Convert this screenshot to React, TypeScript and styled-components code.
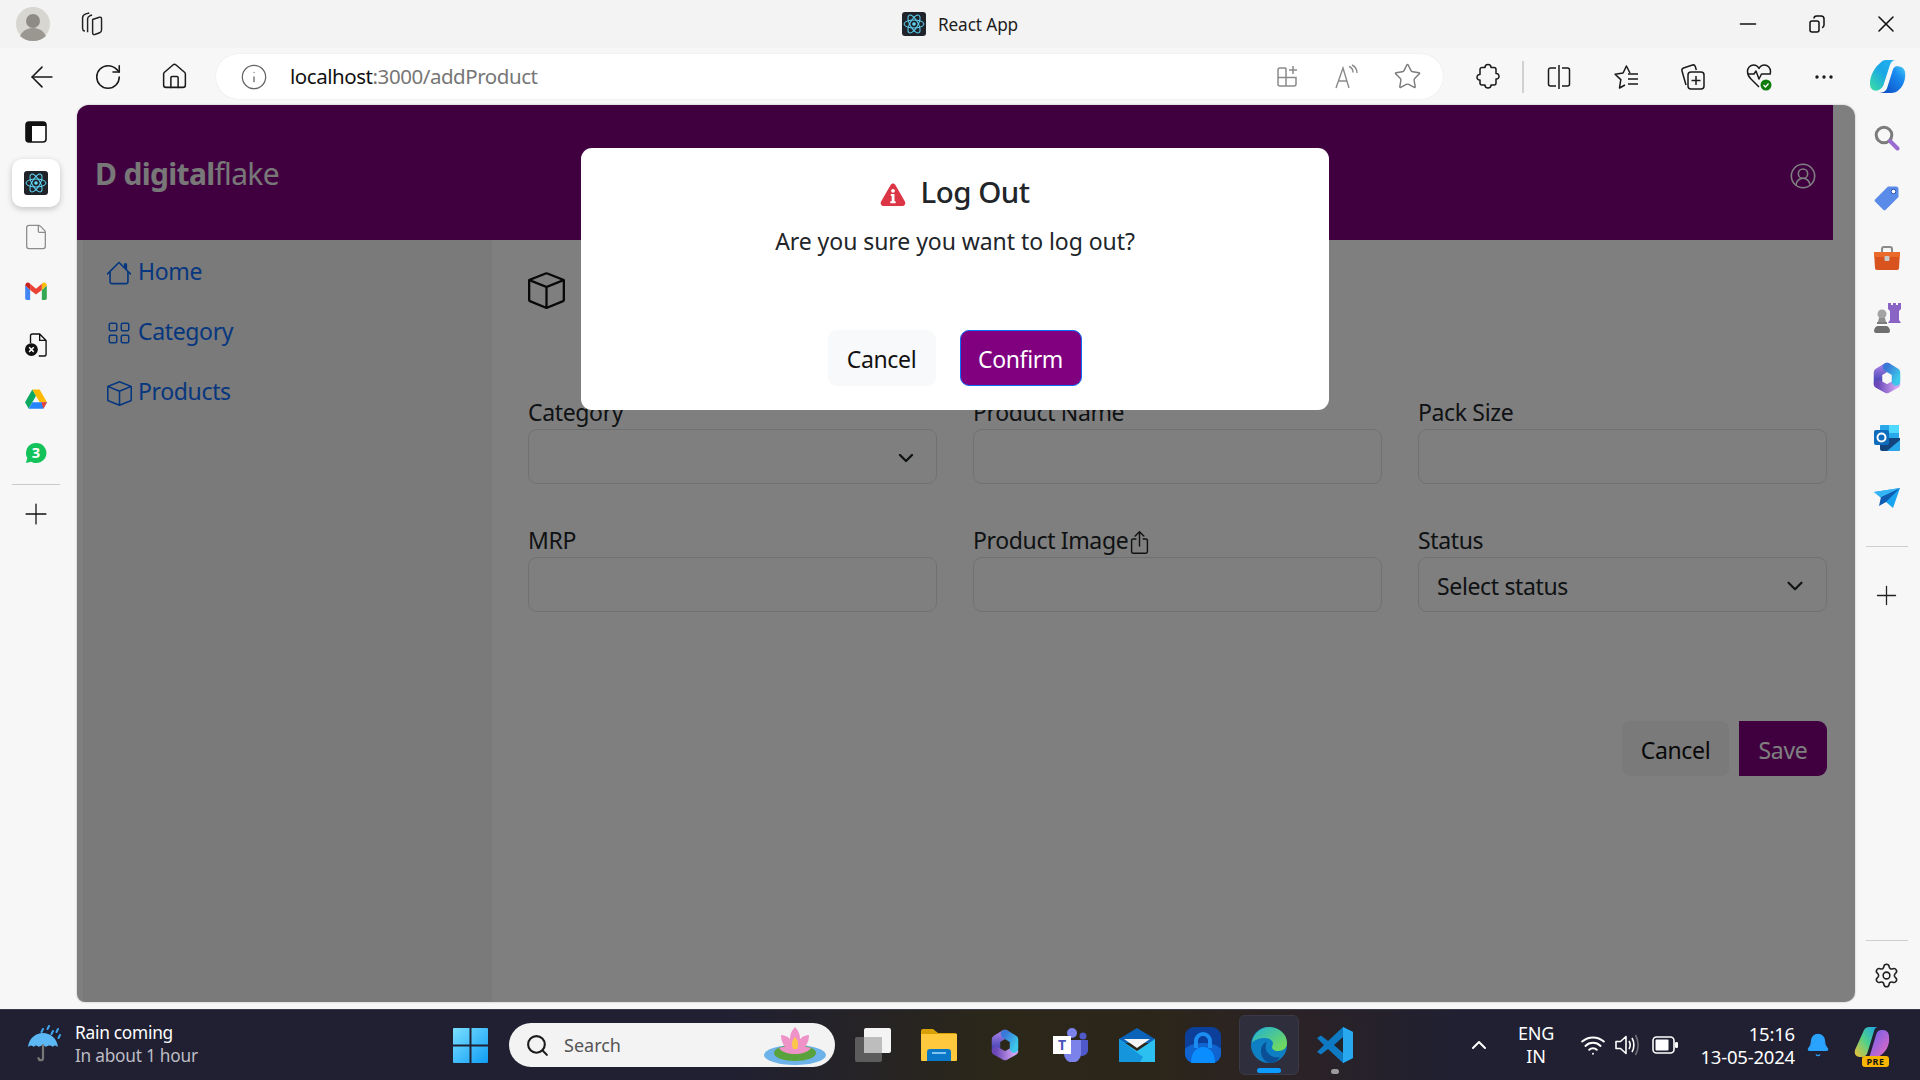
import React from 'react';
import styled, { createGlobalStyle } from 'styled-components';
import {
  ArrowLeft, RotateCw, House, Info, Star, Settings, Plus, ChevronDown, ChevronUp,
  CircleUserRound, Wifi, Bell, Search, File, X, Minus,
} from 'lucide-react';
import { BsHouse, BsGrid, BsBox, BsBoxArrowUp } from 'react-icons/bs';

const FONT = `"Noto Sans", "Open Sans", "Liberation Sans", sans-serif`;

const Global = createGlobalStyle`
  html, body { margin: 0; padding: 0; width: 1920px; height: 1080px; overflow: hidden; background: #f7f7f7; }
  * { box-sizing: border-box; }
  body { font-family: ${FONT}; }
`;

const Screen = styled.div`display: flex; flex-direction: column; width: 1920px; height: 1080px; background: #f7f7f7;`;

/* ---- browser chrome ---- */
const TitleBar = styled.div`display: grid; grid-template-columns: 1fr auto 1fr; align-items: center; height: 48px; background: #f3f3f3;`;
const TitleLeft = styled.div`display: flex; align-items: center; padding-left: 16px; gap: 27px;`;
const TabTitle = styled.div`display: flex; align-items: center; gap: 12px; font-size: 17.2px; letter-spacing: -0.1px; color: #1c1c1c;`;
const WindowButtons = styled.div`display: flex; justify-content: flex-end;`;
const WindowButton = styled.div`width: 69px; height: 48px; display: flex; align-items: center; justify-content: center; color: #111;`;

const Toolbar = styled.div`display: flex; align-items: center; height: 57px; padding-left: 9px; background: #f7f7f7;`;
const Slot = styled.div<{ $w?: number }>`width: ${p => p.$w ?? 66}px; height: 45px; flex: none; display: flex; align-items: center; justify-content: center; color: #1a1a1a;`;
const AddressBar = styled.div`flex: 1; height: 45px; margin: 0 12px 0 9px; padding: 0 6px 0 24px; display: flex; align-items: center; border-radius: 23px; background: #fff; box-shadow: 0 0 2px rgba(0,0,0,.08);`;
const Url = styled.div`flex: 1; margin: -2px 0 0 22px; font-size: 20.5px; letter-spacing: -0.45px; color: #767676; b { font-weight: 400; color: #111; }`;
const ToolbarRule = styled.div`width: 2px; height: 32px; margin: 0 2px 0 1px; background: #d0d0d0;`;

const Body = styled.div`display: flex; height: 904px;`;

const LeftRail = styled.div`width: 77px; flex: none; padding-left: 12px; display: flex; flex-direction: column; align-items: flex-start;`;
const RailItem = styled.div<{ $h?: number; $active?: boolean }>`
  width: 48px; height: ${p => p.$h ?? 54}px; flex: none; display: flex; align-items: center; justify-content: center;
  ${p => p.$active ? 'margin-bottom: 3px; background: #fff; border-radius: 10px; box-shadow: 0 2px 6px rgba(0,0,0,.22);' : ''}
`;
const RailRule = styled.div<{ $gap?: number }>`width: 48px; height: 1px; flex: none; background: #c9c9c9; margin-top: ${p => p.$gap ?? 4}px;`;

const RightRail = styled.div`width: 65px; flex: none; padding: 3px 2px 0 0; display: flex; flex-direction: column; align-items: center;`;
const RightItem = styled.div<{ $h?: number }>`width: 63px; height: ${p => p.$h ?? 60}px; flex: none; display: flex; align-items: center; justify-content: center; color: #222;`;
const RightRule = styled.div`width: 42px; height: 1px; flex: none; background: #cfcfcf; margin-top: 18px;`;
const Spacer = styled.div`flex: 1;`;

/* ---- web page ---- */
const Panel = styled.div`position: relative; width: 1778px; height: 897px; flex: none; overflow: hidden; background: #fff; border-radius: 12px 12px 10px 8px; box-shadow: 0 0 2px rgba(0,0,0,.3);`;
const PageHeader = styled.header`width: 1756px; height: 135px; padding: 0 16px 0 18px; display: flex; align-items: center; justify-content: space-between; background: #800080; color: #fff;`;
const Logo = styled.div`font-size: 30px; letter-spacing: -0.68px; color: #f0f0f0; b { font-weight: 700; } margin-top: 1px;`;
const UserButton = styled.div`display: flex; margin: 6px 0 0 0; color: #fff;`;
const PageBody = styled.div`display: flex; height: 762px; padding-left: 6px;`;
const SideNav = styled.nav`width: 409px; flex: none; padding: 1px 0 0 24px; background: #f4f4f4;`;
const NavLink = styled.a`display: flex; align-items: center; gap: 7px; height: 60px; font-size: 23px; letter-spacing: -0.35px; color: #0d6efd;`;
const NavIcon = styled.span`display: flex; width: 24px; justify-content: center; padding-top: 4px; svg { flex: none; }`;
const Main = styled.main`flex: 1; padding: 32px 0 0 36px;`;
const PageIcon = styled.div`height: 37px; display: flex; color: #111;`;
const FormGrid = styled.div`display: grid; grid-template-columns: repeat(3, 409px); column-gap: 36px; row-gap: 37px; margin-top: 84px;`;
const Field = styled.div`display: flex; flex-direction: column;`;
const Label = styled.label`display: flex; align-items: center; height: 36px; font-size: 23px; letter-spacing: -0.35px; color: #212529; padding-top: 2px;`;
const LabelIcon = styled.span`display: flex; margin-top: 5px;`;
const Control = styled.div`height: 55px; display: flex; align-items: center; justify-content: space-between; padding: 2px 18px 0 18px; border: 1px solid #dee2e6; border-radius: 9px; background: #fff; font-size: 23px; letter-spacing: -0.35px; color: #212529;`;
const Actions = styled.div`display: flex; justify-content: flex-end; gap: 10px; width: 1299px; margin-top: 109px;`;
const PlainButton = styled.div`width: 107px; height: 55px; padding-top: 2px; display: flex; align-items: center; justify-content: center; border-radius: 8px; background: #f4f4f4; font-size: 23px; letter-spacing: -0.35px; color: #111;`;
const SaveButton = styled.div`width: 88px; height: 55px; padding-top: 2px; display: flex; align-items: center; justify-content: center; border-radius: 0 9px 9px 0; background: #800080; font-size: 23px; letter-spacing: -0.35px; color: #fff;`;

const Backdrop = styled.div`position: absolute; inset: 0; background: rgba(0,0,0,.5);`;
const Modal = styled.div`position: absolute; top: 43px; left: 504px; width: 748px; height: 262px; padding: 20px 0 24px; display: flex; flex-direction: column; align-items: center; border-radius: 11px; background: #fff;`;
const ModalTitle = styled.div`display: flex; align-items: center; gap: 14px; height: 46px; font-size: 29.5px; font-weight: 500; letter-spacing: -0.5px; color: #212529;`;
const ModalIcon = styled.span`display: flex; margin-top: 6px;`;
const ModalText = styled.div`margin-top: 9px; font-size: 23px; letter-spacing: -0.06px; line-height: 36px; color: #212529;`;
const ModalActions = styled.div`margin-top: auto; display: flex; gap: 24px; margin-right: 1px;`;
const ModalCancel = styled.div`width: 108px; height: 56px; padding-top: 2px; display: flex; align-items: center; justify-content: center; border-radius: 9px; background: #f8f9fa; font-size: 23px; letter-spacing: -0.35px; color: #111;`;
const ModalConfirm = styled.div`width: 122px; height: 56px; padding-top: 2px; display: flex; align-items: center; justify-content: center; border: 1.5px solid #0d6efd; border-radius: 9px; background: #800080; font-size: 23px; letter-spacing: -0.35px; color: #fff;`;

/* ---- taskbar ---- */
const Taskbar = styled.div`display: flex; align-items: center; height: 71px; margin-top: 0; color: #fff; border-top: 1px solid #3a3a4a;
  background: linear-gradient(90deg, #202032 0%, #202032 38%, #2b2719 52%, #2c261a 60%, #2a2226 68%, #202032 76%, #202032 100%);`;
const Weather = styled.div`width: 449px; padding-left: 27px; flex: none; display: flex; align-items: center; gap: 12px;`;
const WeatherText = styled.div`font-size: 17.3px; letter-spacing: -0.25px; line-height: 23px; margin-top: -2px; span { display: block; color: #bdbdc4; }`;
const StartButton = styled.div`width: 42px; display: flex; flex: none; justify-content: center;`;
const SearchBox = styled.div`width: 326px; height: 44px; margin: 0 5px 0 18px; padding: 0 7px 0 16px; flex: none; display: flex; align-items: center; gap: 14px; border-radius: 22px; background: #f3f3f3; font-size: 18px; color: #555;`;
const SearchLabel = styled.span`flex: 1;`;
const TaskSlot = styled.div<{ $active?: boolean }>`
  position: relative; width: ${p => p.$active ? 60 : 66}px; height: 60px; flex: none; display: flex; align-items: center; justify-content: center;
  ${p => p.$active ? 'margin: 0 3px; background: #2f2e3c; border-radius: 6px; border: 1px solid #3a3946;' : ''}
`;
const RunningBar = styled.i`position: absolute; left: 17px; bottom: 1px; width: 24px; height: 5px; border-radius: 3px; background: #0c9bff;`;
const RunningDot = styled.i`position: absolute; left: 29px; bottom: 1px; width: 8px; height: 5px; border-radius: 3px; background: #9b9b9b;`;
const Tray = styled.div`margin-left: auto; display: flex; align-items: center;`;
const TraySlot = styled.div<{ $w: number }>`width: ${p => p.$w}px; flex: none; display: flex; justify-content: center; align-items: center; color: #fff;`;
const Lang = styled.div`font-size: 18px; letter-spacing: -0.2px; line-height: 23px; text-align: center;`;
const Clock = styled.div`width: 110px; flex: none; font-size: 18.5px; letter-spacing: -0.2px; line-height: 23px; text-align: right; white-space: nowrap;`;
const CopilotPre = styled.div`position: relative; width: 36px; height: 36px; display: flex;`;
const PreBadge = styled.span`position: absolute; left: 8px; bottom: -4px; width: 27px; height: 11px; border-radius: 3px; background: #f7b500; color: #111; font-size: 9px; line-height: 11px; font-weight: 700; letter-spacing: .5px; text-align: center;`;

/* ---- drawn icons ---- */
const Avatar = () => (
  <svg width="34" height="34" viewBox="0 0 34 34"><circle cx="17" cy="17" r="17" fill="#d8d6d1" /><circle cx="17" cy="14" r="7" fill="#8e8b85" /><path d="M4 29c3-6 8-8 13-8s10 2 13 8c-3 3-8 5-13 5s-10-2-13-5z" fill="#9a9791" /></svg>
);
const TabsIcon = () => (
  <svg width="29" height="29" viewBox="0 0 26 26" fill="none" stroke="#222" strokeWidth="1.300"><path d="M7 19c-1-.3-2-1-2-2.500V7c0-2 1-3 3-3.500l3-.8" /><path d="M9.500 20V8c0-1.500.8-2.300 2-2.800l2-.7" /><path d="M14 8.500l6-2c1.200-.4 2 .2 2 1.500v10c0 1.300-.6 2-1.700 2.400L16 22c-1.200.3-2-.3-2-1.500z" /></svg>
);
const ReactTile = ({ s = 24 }: { s?: number }) => (
  <svg width={s} height={s} viewBox="0 0 24 24"><rect width="24" height="24" rx="3" fill="#20232a" /><g fill="none" stroke="#61dafb" strokeWidth="1"><ellipse cx="12" cy="12" rx="10" ry="4" /><ellipse cx="12" cy="12" rx="10" ry="4" transform="rotate(60 12 12)" /><ellipse cx="12" cy="12" rx="10" ry="4" transform="rotate(120 12 12)" /></g><circle cx="12" cy="12" r="1.800" fill="#61dafb" /></svg>
);
const AddTileIcon = () => (
  <svg width="24" height="24" viewBox="0 0 24 24" fill="none" stroke="#8a8a8a" strokeWidth="1.500"><path d="M11 3H5a2 2 0 0 0-2 2v14a2 2 0 0 0 2 2h14a2 2 0 0 0 2-2v-6.500H3M11 3v18" /><path d="M18 1v8M14 5h8" /></svg>
);
const ReadAloudIcon = () => (
  <svg width="26" height="26" viewBox="0 0 26 26" fill="none" stroke="#8a8a8a" strokeWidth="1.400"><path d="M2 24L9 4l6 20M4.500 17h9" /><path d="M15 2.500c2.500 1 4 3 4 6M18 1c3 1.500 5 4 5 8" /></svg>
);
const PuzzleIcon = () => (
  <svg width="25" height="27" viewBox="0 0 25 27" fill="none" stroke="#1a1a1a" strokeWidth="1.500" strokeLinejoin="round"><path d="M9 4.500c0-4 6-4 6 0h3a2 2 0 0 1 2 2v4c4-.5 4 6 0 5.500v4a2 2 0 0 1-2 2h-3c0 4-6 4-6 0H6a2 2 0 0 1-2-2v-3c-4 .5-4-6 0-5.500v-5a2 2 0 0 1 2-2z" /></svg>
);
const SplitIcon = () => (
  <svg width="24" height="26" viewBox="0 0 24 26" fill="none" stroke="#1a1a1a" strokeWidth="1.500"><path d="M12 1v24M9 4H3.500A2 2 0 0 0 1.500 6v14a2 2 0 0 0 2 2H9M15 4h5.500a2 2 0 0 1 2 2v14a2 2 0 0 1-2 2H15" /></svg>
);
const FavoritesIcon = () => (
  <svg width="26" height="26" viewBox="0 0 26 26" fill="none" stroke="#1a1a1a" strokeWidth="1.500" strokeLinejoin="round"><path d="M17 9l-3.600-7-3.300 7-8 1.200 5.700 5.400L6.500 24l5.500-3" /><path d="M15 10h10M15 15h10M15 20h10" /></svg>
);
const CollectionsIcon = () => (
  <svg width="26" height="28" viewBox="0 0 26 28" fill="none" stroke="#1a1a1a" strokeWidth="1.500"><path d="M6 22L2 8c-.4-1.500.2-2.500 1.500-3l9-3c1.400-.4 2.300.2 2.800 1.500l1 3.500" /><rect x="8" y="9" width="16" height="17" rx="3" /><path d="M16 13v9M11.500 17.500h9" /></svg>
);
const HealthIcon = () => (
  <svg width="28" height="30" viewBox="0 0 28 30" fill="none"><path d="M5 17C3 15 1.500 13 1.500 9.500 1.500 5.500 4.500 3 7.500 3c2.700 0 4.500 1.500 5.500 3.500C14 4.500 15.800 3 18.500 3c3 0 6 2.500 6 6.500 0 1-.2 2-.5 3M1.500 12H8l2 -3 3 8 2.500-5H24M5 17l8 8" stroke="#1a1a1a" strokeWidth="1.500" strokeLinejoin="round" /><circle cx="20" cy="23" r="5.500" fill="#107c10" /><path d="M17.500 23l2 2 3-3.500" stroke="#fff" strokeWidth="1.300" /></svg>
);
const Dots = () => (
  <svg width="20" height="6" viewBox="0 0 20 6" fill="#1a1a1a"><circle cx="3" cy="3" r="1.700" /><circle cx="10" cy="3" r="1.700" /><circle cx="17" cy="3" r="1.700" /></svg>
);
const CopilotIcon = () => (
  <svg width="36" height="33" viewBox="0 0 36 42" preserveAspectRatio="none"><defs><linearGradient id="cpa" x1="0" y1="1" x2="1" y2="0"><stop offset="0" stopColor="#3ae0a0" /><stop offset=".55" stopColor="#1ba6e6" /><stop offset="1" stopColor="#22b4f2" /></linearGradient><linearGradient id="cpb" x1="0" y1="1" x2="1" y2="0"><stop offset="0" stopColor="#0b46c0" /><stop offset=".7" stopColor="#1a8cf0" /><stop offset="1" stopColor="#47d0f5" /></linearGradient></defs><path d="M27 8c3 0 7 1 8 7 1 8-1 17-6 23-2 3-5 4-8 4H9c5 0 7-3 8-6l5-20c1-5 2-8 5-8z" fill="url(#cpb)" /><path d="M11 3c1-2 3-3 5-3h10c-3 0-5 2-6 6l-6 24c-1 6-5 9-8 9-4 0-6-3-6-9C0 19 5 9 11 3z" fill="url(#cpa)" /></svg>
);
const PanelIcon = () => (
  <svg width="22" height="22" viewBox="0 0 22 22"><rect x="1" y="1" width="20" height="20" rx="3" fill="#fff" stroke="#111" strokeWidth="1.600" /><path d="M1 5V4a3 3 0 0 1 3-3h14a3 3 0 0 1 3 3v1z M1 5h6v16H4a3 3 0 0 1-3-3z" fill="#111" /></svg>
);
const Gmail = () => (
  <svg width="22" height="18" viewBox="0 0 24 20"><path d="M0 4v14a2 2 0 0 0 2 2h3.500V9z" fill="#4285f4" /><path d="M24 4v14a2 2 0 0 1-2 2h-3.500V9z" fill="#34a853" /><path d="M18.500 9V2L12 7.500 5.500 2v7L12 14z" fill="#ea4335" /><path d="M0 4c0-3 3-5 5.500-2v7z" fill="#c5221f" /><path d="M24 4c0-3-3-5-5.500-2v7z" fill="#fbbc04" /></svg>
);
const FileXIcon = () => (
  <svg width="22" height="24" viewBox="0 0 24 26" fill="none"><path d="M6 11V3a2 2 0 0 1 2-2h8l7 7v15a2 2 0 0 1-2 2h-6M16 1v7h7" stroke="#111" strokeWidth="1.500" /><circle cx="7" cy="18" r="7" fill="#111" /><path d="M4.500 15.500l5 5M9.500 15.500l-5 5" stroke="#fff" strokeWidth="1.600" /></svg>
);
const Drive = () => (
  <svg width="22" height="20" viewBox="0 0 24 21"><path d="M8 0L0 14l4 7 8-14z" fill="#0da960" /><path d="M8 0h8l8 14h-8z" fill="#ffba00" /><path d="M4 21l4-7h16l-4 7z" fill="#2684fc" /><path d="M20 21l4-7h-6z" fill="#ea4335" /></svg>
);
const WhatsAppBadge = () => (
  <svg width="22" height="22" viewBox="0 0 24 24"><path d="M12 1a11 11 0 0 0-9.500 16.500L1 23l5.800-1.500A11 11 0 1 0 12 1z" fill="#14c25a" /><text x="12" y="17.500" textAnchor="middle" fontSize="16" fontWeight="700" fontFamily="Noto Sans, sans-serif" fill="#fff">3</text></svg>
);
const SearchColor = () => (
  <svg width="26" height="26" viewBox="0 0 26 26"><circle cx="10" cy="10" r="7.800" fill="none" stroke="#7b7b7b" strokeWidth="3" /><path d="M16 16l7.500 7.500" stroke="#9a6bcf" strokeWidth="4" strokeLinecap="round" /></svg>
);
const TagColor = () => (
  <svg width="26" height="26" viewBox="0 0 26 26"><path d="M14 1.500h8a2.500 2.500 0 0 1 2.500 2.500v8L12 24.500a2 2 0 0 1-3 0L1.500 17a2 2 0 0 1 0-3z" fill="#5b8be8" /><circle cx="19.500" cy="6.500" r="2.300" fill="#fff" stroke="#2c4fb0" strokeWidth="1" /></svg>
);
const Toolbox = () => (
  <svg width="28" height="24" viewBox="0 0 28 24"><path d="M9 6V3a2 2 0 0 1 2-2h6a2 2 0 0 1 2 2v3" fill="none" stroke="#8a8a8a" strokeWidth="2" /><path d="M1 6h26l-1 16a2 2 0 0 1-2 2H4a2 2 0 0 1-2-2z" fill="#d9531e" /><path d="M1 6h26v5H1z" fill="#ea6a2c" /><rect x="11.500" y="10" width="5" height="5" rx="1" fill="#c8c8c8" /></svg>
);
const Chess = () => (
  <svg width="28" height="32" viewBox="0 0 28 32"><path d="M15 1h3v2h2V1h3v2h2V1h3v6l-2 2v9l2 3H15l2-3V9l-2-2z" fill="#8a64c4" /><circle cx="9" cy="12" r="4.500" fill="#a3a3a3" /><path d="M6 16h6l1 4H5z" fill="#8e8e8e" /><path d="M4 20h10v2H4z" fill="#7c7c7c" /><path d="M1 29c0-3 2-5 4-5h8c2 0 4 2 4 5a2 2 0 0 1-2 2H3a2 2 0 0 1-2-2z" fill="#6f6f6f" /></svg>
);
const HexLogo = ({ id }: { id: string }) => (
  <svg width="28" height="32" viewBox="0 0 28 32" fill="none" strokeWidth="8.500" strokeLinecap="round" strokeLinejoin="round"><defs><linearGradient id={`${id}a`} x1="0" y1="0" x2="1" y2="1"><stop offset="0" stopColor="#3a78d8" /><stop offset="1" stopColor="#3cc8ea" /></linearGradient><linearGradient id={`${id}b`} x1="0" y1="0" x2="0" y2="1"><stop offset="0" stopColor="#9a78e0" /><stop offset="1" stopColor="#3a3fb0" /></linearGradient><linearGradient id={`${id}c`} x1="0" y1="0" x2="1" y2="0"><stop offset="0" stopColor="#6a48b8" /><stop offset="1" stopColor="#d0a4f2" /></linearGradient></defs><path d="M5 21.500v-11L14 5" stroke={`url(#${id}b)`} /><path d="M5 22l9 5 9-5" stroke={`url(#${id}c)`} /><path d="M14 5l9 5.500v9" stroke={`url(#${id}a)`} /></svg>
);
const Outlook = () => (
  <svg width="26" height="26" viewBox="0 0 26 26"><rect x="6" y="0" width="19" height="15" rx="1" fill="#28a8ea" /><rect x="15" y="0" width="10" height="8" fill="#50d9ff" /><path d="M6 13h20v11a2 2 0 0 1-2 2H8a2 2 0 0 1-2-2z" fill="#14447d" /><path d="M13 26l13-11v9a2 2 0 0 1-2 2z" fill="#28a8ea" /><rect x="0" y="5" width="15" height="15" rx="2" fill="#0f6cbd" /><circle cx="7.500" cy="12.500" r="4" fill="none" stroke="#fff" strokeWidth="2" /></svg>
);
const Plane = () => (
  <svg width="26" height="20" viewBox="0 0 26 20"><path d="M0 4L26 0 19 20l-7-6z" fill="#1aa3ee" /><path d="M26 0L7 9l-2 9 7-4z" fill="#0f5cb0" /><path d="M0 4l7 5 19-9z" fill="#35b5f5" /></svg>
);
const AlertIcon = () => (
  <svg width="26" height="23" viewBox="0 0 26 23"><path d="M10.600 2L1.100 18.500C0 20.500 1.200 23 3.500 23h19c2.300 0 3.500-2.500 2.400-4.500L15.400 2c-1.100-2-3.700-2-4.800 0z" fill="#dc3545" /><circle cx="13" cy="7.800" r="1.900" fill="#fff" /><path d="M10.800 11h3.700v7.200h1.200v2h-5.400v-2h1.400v-5.200h-.9z" fill="#fff" /></svg>
);
const Umbrella = () => (
  <svg width="36" height="40" viewBox="0 0 36 40"><g stroke="#3fa4ee" strokeWidth="2" strokeLinecap="round"><path d="M16 4l-1.500 3M22 1l-1.500 3M26 6l-1.500 3M31 4l-1.500 3M33 10l-1.500 3" /></g><path d="M1 22C2 13 9 8 16 8s14 5 15 14c-2-2-4-2-5 0-2-2-5-2-7 0-2-2-5-2-7 0-2-2-4-2-5 0-2-2-4-2-6 0z" fill="#5cb8f5" /><path d="M16 20v13c0 3-4 3-4.500 0" fill="none" stroke="#777" strokeWidth="2.200" strokeLinecap="round" /></svg>
);
const WindowsLogo = () => (
  <svg width="35" height="35" viewBox="0 0 35 35"><defs><linearGradient id="win" x1="0" y1="0" x2="1" y2="1"><stop offset="0" stopColor="#7be0ff" /><stop offset="1" stopColor="#0f9cf5" /></linearGradient></defs><path d="M1 0h15.500v16.500H0V1a1 1 0 0 1 1-1zM18.500 0H34a1 1 0 0 1 1 1v15.500H18.500zM0 18.500h16.500V35H1a1 1 0 0 1-1-1zM18.500 18.500H35V34a1 1 0 0 1-1 1H18.500z" fill="url(#win)" /></svg>
);
const Lotus = () => (
  <svg width="66" height="40" viewBox="0 0 66 40"><ellipse cx="33" cy="30" rx="31" ry="10" fill="#6db2e8" /><ellipse cx="33" cy="28" rx="21" ry="8" fill="#5aa23c" /><path d="M33 2c4 4 5 8 5 12 3-3 6-4 9-4 0 4-1 8-4 12 2 0 4 0 6 1-3 4-9 6-16 6s-13-2-16-6c2-1 4-1 6-1-3-4-4-8-4-12 3 0 6 1 9 4 0-4 1-8 5-12z" fill="#ef92c8" /><path d="M33 12c3 3 4 7 2 12h-4c-2-5-1-9 2-12z" fill="#fbc64a" /></svg>
);
const TaskView = () => (
  <svg width="36" height="34" viewBox="0 0 36 34"><rect x="9" y="0" width="27" height="25" rx="2" fill="#f4f4f4" /><rect x="0" y="9" width="27" height="25" rx="2" fill="#5c5c5c" /><rect x="9" y="9" width="18" height="16" fill="#bdbdbd" /></svg>
);
const Folder = () => (
  <svg width="36" height="34" viewBox="0 0 36 34"><path d="M0 3a2 2 0 0 1 2-2h10l5 4h17a2 2 0 0 1 2 2v6H0z" fill="#d9a006" /><path d="M0 6h36v26a1 1 0 0 1-1 1H1a1 1 0 0 1-1-1z" fill="#ffc83d" /><path d="M6 24a3 3 0 0 1 3-3h18a3 3 0 0 1 3 3v9H6z" fill="#0b78c7" /><path d="M11 25h14" stroke="#7fc4f0" strokeWidth="2" /></svg>
);
const Teams = () => (
  <svg width="36" height="34" viewBox="0 0 36 34"><circle cx="19" cy="5" r="5" fill="#7b83eb" /><circle cx="30" cy="8" r="3.500" fill="#5059c9" /><path d="M26 12h9v11a6 6 0 0 1-9 4z" fill="#5059c9" /><path d="M11 12h17v14a8 8 0 0 1-17 0z" fill="#7b83eb" /><rect x="0" y="8" width="18" height="18" fill="#fff" /><text x="9" y="22" textAnchor="middle" fontSize="14" fontWeight="700" fontFamily="Noto Sans, sans-serif" fill="#4b53bc">T</text></svg>
);
const Mail = () => (
  <svg width="36" height="34" viewBox="0 0 36 34"><path d="M0 11L18 0l18 11v4H0z" fill="#0a63b8" /><path d="M5 11h26L18 20z" fill="#f4f4f4" /><path d="M0 11l18 12 18-12v23H0z" fill="#2cc0f0" /><path d="M0 11l24 18-3 5H0z" fill="#1595dc" /></svg>
);
const Lock = () => (
  <svg width="36" height="36" viewBox="0 0 36 36"><rect width="36" height="36" rx="9" fill="#0b3f9a" /><path d="M0 22c6-8 30-8 36 0v5a9 9 0 0 1-9 9H9a9 9 0 0 1-9-9z" fill="#0f64d0" /><path d="M11 21v-7a7 7 0 0 1 14 0v7" fill="none" stroke="#1b8df0" strokeWidth="4" /><path d="M6 36c0-10 5-16 12-16s12 6 12 16z" fill="#0a8dff" /></svg>
);
const Edge = () => (
  <svg width="36" height="36" viewBox="0 0 36 36"><defs><linearGradient id="edg" x1="0" y1="0" x2="1" y2="1"><stop offset="0" stopColor="#1fb0d8" /><stop offset="1" stopColor="#7fe04a" /></linearGradient></defs><circle cx="18" cy="18" r="18" fill="#0f7fc4" /><path d="M1 16C2 7 9 0 18 0c10 0 18 7 18 16 0 5-4 8-9 8-4 0-6-2-6-4 0-1 1-2 1-4-1-3-4-5-8-5C8 11 3 13 1 16z" fill="url(#edg)" /><path d="M20 36c-6 0-10-6-10-12 0-4 2-8 6-9-2 3-2 8 1 11 3 4 8 5 12 4-2 3-5 6-9 6z" fill="#0b4f96" /></svg>
);
const VSCode = () => (
  <svg width="36" height="36" viewBox="0 0 36 36"><path d="M26 0l10 5v26l-10 5-15-14-7 5.500L0 25l7-7-7-7 4-2.500L11 14z" fill="#0f7ac4" /><path d="M26 0l10 5v26l-10 5z" fill="#27a8ef" /><path d="M26 10l-9 8 9 8z" fill="#20232a" /></svg>
);
const Speaker = () => (
  <svg width="26" height="24" viewBox="0 0 26 24" fill="none" stroke="#fff" strokeWidth="1.600"><path d="M1 8.500h4.500L11 3.500v17l-5.500-5H1z" strokeLinejoin="round" /><path d="M14 8c1.500 2.500 1.500 5.500 0 8M17 5c2.500 4 2.500 10 0 14" /><path d="M20.500 2c3.500 6 3.500 14 0 20" stroke="#70707a" /></svg>
);
const Battery = () => (
  <svg width="26" height="18" viewBox="0 0 26 18"><rect x="1" y="1" width="21" height="16" rx="3.500" fill="none" stroke="#fff" strokeWidth="1.600" /><rect x="3.500" y="3.500" width="13" height="11" rx="1" fill="#fff" /><rect x="23" y="6" width="3" height="6" rx="1.200" fill="#fff" /></svg>
);
const CopilotColor = () => (
  <svg width="36" height="32" viewBox="0 0 36 32"><defs><linearGradient id="cpc" x1="0" y1="1" x2="1" y2="0"><stop offset="0" stopColor="#f5c033" /><stop offset=".5" stopColor="#4fd08a" /><stop offset="1" stopColor="#1aa3ee" /></linearGradient><linearGradient id="cpd" x1="0" y1="0" x2="1" y2="1"><stop offset="0" stopColor="#5b5ff0" /><stop offset="1" stopColor="#f06ac0" /></linearGradient></defs><path d="M10 3c1-2 3-3 5-3h9c-2 0-3 1-4 4l-6 20c-1 4-3 6-6 6H6c-4 0-6-3-5-7z" fill="url(#cpc)" /><path d="M24 30c-1 1-2 2-4 2h-8c2 0 3-1 4-4l6-20c1-4 3-5 6-5h1c4 0 6 3 6 7 1 8-3 16-11 20z" fill="url(#cpd)" /></svg>
);
const RestoreIcon = () => (
  <svg width="16" height="18" viewBox="0 0 16 18" fill="none" stroke="#111" strokeWidth="1.500"><rect x="1" y="6" width="9" height="11" rx="2" /><path d="M5 3.500C5 2 6 1 7.500 1H12a3 3 0 0 1 3 3v6c0 1.500-.8 2.500-2 2.800" /></svg>
);

const NAV = [
  { label: 'Home', icon: <BsHouse size={26} /> },
  { label: 'Category', icon: <BsGrid size={24} /> },
  { label: 'Products', icon: <BsBox size={25} /> },
];

export default function App() {
  return (
    <Screen>
      <Global />
      <TitleBar>
        <TitleLeft><Avatar /><TabsIcon /></TitleLeft>
        <TabTitle><ReactTile />React App</TabTitle>
        <WindowButtons>
          <WindowButton><Minus size={26} strokeWidth={1.4} /></WindowButton>
          <WindowButton><RestoreIcon /></WindowButton>
          <WindowButton><X size={28} strokeWidth={1.3} /></WindowButton>
        </WindowButtons>
      </TitleBar>

      <Toolbar>
        <Slot><ArrowLeft size={34} strokeWidth={1.1} /></Slot>
        <Slot><RotateCw size={30} strokeWidth={1.25} /></Slot>
        <Slot><House size={29} strokeWidth={1.25} /></Slot>
        <AddressBar>
          <Info size={28} strokeWidth={1.1} color="#666" />
          <Url><b>localhost</b>:3000/addProduct</Url>
          <Slot $w={60}><AddTileIcon /></Slot>
          <Slot $w={60}><ReadAloudIcon /></Slot>
          <Slot $w={60}><Star size={29} strokeWidth={1.2} color="#7c7c7c" /></Slot>
        </AddressBar>
        <Slot><PuzzleIcon /></Slot>
        <ToolbarRule />
        <Slot><SplitIcon /></Slot>
        <Slot $w={67}><FavoritesIcon /></Slot>
        <Slot $w={67}><CollectionsIcon /></Slot>
        <Slot $w={67}><HealthIcon /></Slot>
        <Slot $w={62}><Dots /></Slot>
        <Slot $w={65}><CopilotIcon /></Slot>
      </Toolbar>

      <Body>
        <LeftRail>
          <RailItem><PanelIcon /></RailItem>
          <RailItem $h={48} $active><ReactTile /></RailItem>
          <RailItem><File size={28} strokeWidth={1.1} color="#8d8d8d" /></RailItem>
          <RailItem><Gmail /></RailItem>
          <RailItem><FileXIcon /></RailItem>
          <RailItem><Drive /></RailItem>
          <RailItem><WhatsAppBadge /></RailItem>
          <RailRule />
          <RailItem $h={58}><Plus size={34} strokeWidth={0.9} color="#111" /></RailItem>
        </LeftRail>

        <Panel>
          <PageHeader>
            <Logo><b>D digital</b>flake</Logo>
            <UserButton><CircleUserRound size={28} strokeWidth={1.35} /></UserButton>
          </PageHeader>
          <PageBody>
            <SideNav>
              {NAV.map(n => (
                <NavLink key={n.label}><NavIcon>{n.icon}</NavIcon>{n.label}</NavLink>
              ))}
            </SideNav>
            <Main>
              <PageIcon><BsBox size={37} /></PageIcon>
              <FormGrid>
                <Field><Label>Category</Label><Control><span /><ChevronDown size={24} strokeWidth={2.4} /></Control></Field>
                <Field><Label>Product Name</Label><Control /></Field>
                <Field><Label>Pack Size</Label><Control /></Field>
                <Field><Label>MRP</Label><Control /></Field>
                <Field><Label>Product Image<LabelIcon><BsBoxArrowUp size={23} /></LabelIcon></Label><Control /></Field>
                <Field><Label>Status</Label><Control>Select status<ChevronDown size={26} strokeWidth={2} /></Control></Field>
              </FormGrid>
              <Actions>
                <PlainButton>Cancel</PlainButton>
                <SaveButton>Save</SaveButton>
              </Actions>
            </Main>
          </PageBody>
          <Backdrop />
          <Modal>
            <ModalTitle><ModalIcon><AlertIcon /></ModalIcon>Log Out</ModalTitle>
            <ModalText>Are you sure you want to log out?</ModalText>
            <ModalActions>
              <ModalCancel>Cancel</ModalCancel>
              <ModalConfirm>Confirm</ModalConfirm>
            </ModalActions>
          </Modal>
        </Panel>

        <RightRail>
          <RightItem><SearchColor /></RightItem>
          <RightItem><TagColor /></RightItem>
          <RightItem><Toolbox /></RightItem>
          <RightItem><Chess /></RightItem>
          <RightItem><HexLogo id="hexr" /></RightItem>
          <RightItem><Outlook /></RightItem>
          <RightItem><Plane /></RightItem>
          <RightRule />
          <RightItem $h={96}><Plus size={31} strokeWidth={1} /></RightItem>
          <Spacer />
          <RightRule />
          <RightItem $h={68}><Settings size={27} strokeWidth={1.4} /></RightItem>
        </RightRail>
      </Body>

      <Taskbar>
        <Weather>
          <Umbrella />
          <WeatherText>Rain coming<span>In about 1 hour</span></WeatherText>
        </Weather>
        <StartButton><WindowsLogo /></StartButton>
        <SearchBox>
          <Search size={25} strokeWidth={2} color="#1a1a1a" />
          <SearchLabel>Search</SearchLabel>
          <Lotus />
        </SearchBox>
        <TaskSlot><TaskView /></TaskSlot>
        <TaskSlot><Folder /></TaskSlot>
        <TaskSlot><HexLogo id="hext" /></TaskSlot>
        <TaskSlot><Teams /></TaskSlot>
        <TaskSlot><Mail /></TaskSlot>
        <TaskSlot><Lock /></TaskSlot>
        <TaskSlot $active><Edge /><RunningBar /></TaskSlot>
        <TaskSlot><VSCode /><RunningDot /></TaskSlot>
        <Tray>
          <TraySlot $w={36}><ChevronUp size={24} strokeWidth={2} /></TraySlot>
          <TraySlot $w={78}><Lang>ENG<br />IN</Lang></TraySlot>
          <TraySlot $w={36}><Wifi size={26} strokeWidth={1.8} /></TraySlot>
          <TraySlot $w={34}><Speaker /></TraySlot>
          <TraySlot $w={40}><Battery /></TraySlot>
          <Clock>15:16<br />13-05-2024</Clock>
          <TraySlot $w={46}><Bell size={26} strokeWidth={1} fill="#2aa3ff" color="#2aa3ff" /></TraySlot>
          <TraySlot $w={62}><CopilotPre><CopilotColor /><PreBadge>PRE</PreBadge></CopilotPre></TraySlot>
          <TraySlot $w={17} />
        </Tray>
      </Taskbar>
    </Screen>
  );
}
